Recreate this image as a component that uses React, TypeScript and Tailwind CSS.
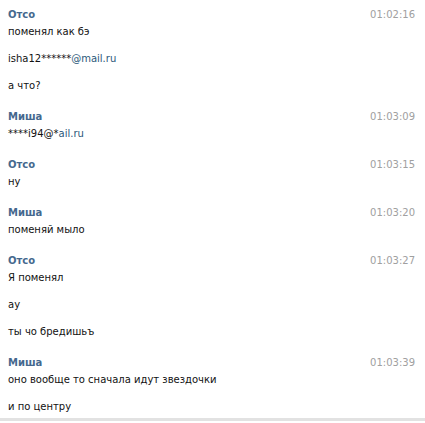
import React from "react";

type Msg = { name: string; time: string; lines: React.ReactNode[] };

const blue = "text-[#2b587a]";

const data: Msg[] = [
  {
    name: "Отсо",
    time: "01:02:16",
    lines: [
      "поменял как бэ",
      <>
        isha12******<span className={blue}>@mail.ru</span>
      </>,
      "а что?",
    ],
  },
  {
    name: "Миша",
    time: "01:03:09",
    lines: [
      <>
        ****i94@*<span className={blue}>ail.ru</span>
      </>,
    ],
  },
  { name: "Отсо", time: "01:03:15", lines: ["ну"] },
  { name: "Миша", time: "01:03:20", lines: ["поменяй мыло"] },
  { name: "Отсо", time: "01:03:27", lines: ["Я поменял", "ау", "ты чо бредишьъ"] },
  {
    name: "Миша",
    time: "01:03:39",
    lines: ["оно вообще то сначала идут звездочки", "и по центру"],
  },
];

export default function App() {
  return (
    <div
      className="w-[425px] h-[423px] bg-white overflow-hidden text-[10px] text-[#111111]"
      style={{ fontFamily: "Tahoma, 'DejaVu Sans', sans-serif" }}
    >
      <div className="flex flex-col gap-[14px] pt-[6px] pb-[3px] border-b-[3px] border-[#e2e2e2]">
        {data.map((m, i) => (
          <div key={i} className="flex flex-col gap-[10px] px-[8px]">
            <div className="flex flex-col">
              <div className="flex justify-between leading-[17px]">
                <span className="font-bold text-[#45688e]">{m.name}</span>
                <span className="text-[#a0a0a0] pr-[2px]">{m.time}</span>
              </div>
              <div className="leading-[17px]">{m.lines[0]}</div>
            </div>
            {m.lines.slice(1).map((l, j) => (
              <div key={j} className="leading-[17px]">
                {l}
              </div>
            ))}
          </div>
        ))}
      </div>
    </div>
  );
}
